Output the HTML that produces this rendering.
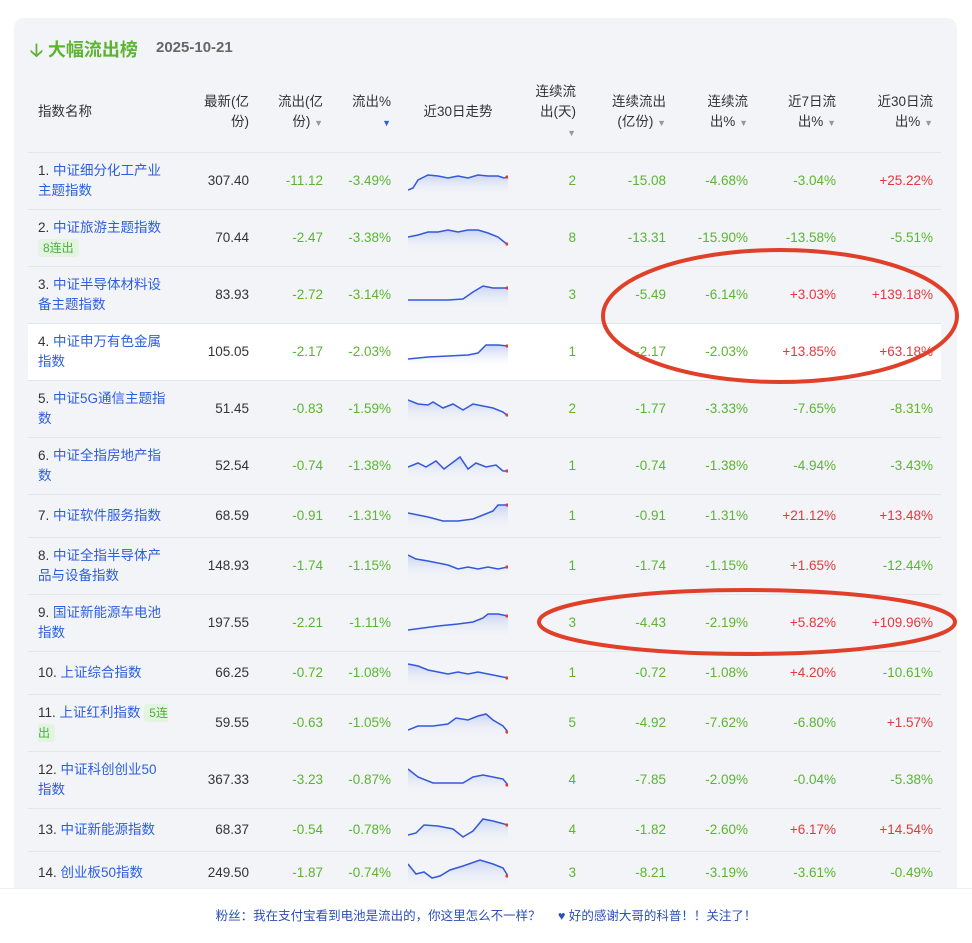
<!DOCTYPE html>
<html><head><meta charset="utf-8"><style>
*{margin:0;padding:0;box-sizing:border-box}
body{width:972px;height:928px;background:#fff;font-family:"Liberation Sans","Noto Sans CJK SC",sans-serif;font-size:13.5px;color:#333;position:relative;overflow:hidden}
.card{position:absolute;left:14px;top:18px;width:943px;height:900px;background:#f2f4f7;border-radius:10px}
.title{position:absolute;left:30px;top:36px;font-size:18px;font-weight:bold;color:#5cb531}
.date{position:absolute;left:156px;top:39px;font-size:15px;font-weight:bold;color:#666}
.hd{position:absolute;top:80px;height:66px;font-size:13.5px;color:#333;line-height:20px}
.r{position:absolute;left:28px;width:913px;border-top:1px solid #e3e6ea}
.r>div{position:absolute;top:0;bottom:0;display:flex;align-items:center;justify-content:flex-end;text-align:right;line-height:20px}
.r .n{left:10px;width:130px;justify-content:flex-start;text-align:left}
.r .a{left:150px;width:71px}
.r .b{left:225px;width:70px;color:#5cb531}
.r .c{left:300px;width:63px;color:#5cb531}
.r .s{left:380px;width:100px;justify-content:center}
.r .d{left:490px;width:58px;color:#5cb531}
.r .e{left:560px;width:78px;color:#5cb531}
.r .f{left:640px;width:80px;color:#5cb531}
.r .g{left:730px;width:78px;color:#5cb531}
.r .h{left:820px;width:85px;color:#5cb531}
.red{color:#e5383b!important}
a{color:#2e5ee0;text-decoration:none}
.tag{background:#e3f5e0;color:#4cae3a;font-size:12px;padding:2px 5px;border-radius:3px}
.t{color:#999;font-size:9px}
.tb{color:#2e5ee0;font-size:9px}
.bar{position:absolute;left:0;top:888px;width:972px;height:40px;background:#fff;border-top:1px solid #eee;text-align:center;font-size:12.5px;color:#2b4fb8;line-height:54px}
</style></head><body>
<div class="card"></div>
<div class="title">🡣 大幅流出榜</div>
<div class="date">2025-10-21</div>

<div class="hd" style="left:38px;top:102px">指数名称</div>
<div class="hd" style="left:190px;width:59px;text-align:right;top:92px">最新(亿<br>份)</div>
<div class="hd" style="left:264px;width:59px;text-align:right;top:92px">流出(亿<br>份) <span class="t">▼</span></div>
<div class="hd" style="left:330px;width:61px;text-align:right;top:92px">流出%<br><span class="tb">▼</span></div>
<div class="hd" style="left:408px;width:100px;text-align:center;top:102px">近30日走势</div>
<div class="hd" style="left:520px;width:56px;text-align:right;top:82px">连续流<br>出(天)<br><span class="t">▼</span></div>
<div class="hd" style="left:590px;width:76px;text-align:right;top:92px">连续流出<br>(亿份) <span class="t">▼</span></div>
<div class="hd" style="left:680px;width:68px;text-align:right;top:92px">连续流<br>出% <span class="t">▼</span></div>
<div class="hd" style="left:760px;width:76px;text-align:right;top:92px">近7日流<br>出% <span class="t">▼</span></div>
<div class="hd" style="left:850px;width:83px;text-align:right;top:92px">近30日流<br>出% <span class="t">▼</span></div>

<svg width="0" height="0" style="position:absolute"><defs><linearGradient id="gf" x1="0" y1="0" x2="0" y2="1"><stop offset="0" stop-color="#c9d4f5"/><stop offset="1" stop-color="#f2f4f7" stop-opacity="0"/></linearGradient></defs></svg>

<div class="r" style="top:152px;height:57px"><div class="n"><span>1. <a>中证细分化工产业主题指数</a></span></div><div class="a">307.40</div><div class="b">-11.12</div><div class="c">-3.49%</div><div class="s"><svg width="100" height="30"><path d="M0,24 L5,22 10,14 20,9 30,10 40,12 50,10 60,12 70,9 80,10 90,10 96,12 100,11 V30 H0Z" fill="url(#gf)"/><polyline points="0,24 5,22 10,14 20,9 30,10 40,12 50,10 60,12 70,9 80,10 90,10 96,12 100,11" fill="none" stroke="#3558d8" stroke-width="1.5"/><circle cx="99" cy="11" r="1.6" fill="#e5383b"/></svg></div><div class="d">2</div><div class="e">-15.08</div><div class="f">-4.68%</div><div class="g">-3.04%</div><div class="h red">+25.22%</div></div>

<div class="r" style="top:209px;height:57px"><div class="n"><span>2. <a>中证旅游主题指数</a><br><span class="tag">8连出</span></span></div><div class="a">70.44</div><div class="b">-2.47</div><div class="c">-3.38%</div><div class="s"><svg width="100" height="30"><path d="M0,14 L10,12 20,9 30,9 40,7 50,9 60,7 70,7 80,10 90,14 100,22 V30 H0Z" fill="url(#gf)"/><polyline points="0,14 10,12 20,9 30,9 40,7 50,9 60,7 70,7 80,10 90,14 100,22" fill="none" stroke="#3558d8" stroke-width="1.5"/><circle cx="99" cy="21" r="1.6" fill="#e5383b"/></svg></div><div class="d">8</div><div class="e">-13.31</div><div class="f">-15.90%</div><div class="g">-13.58%</div><div class="h">-5.51%</div></div>

<div class="r" style="top:266px;height:57px"><div class="n"><span>3. <a>中证半导体材料设备主题指数</a></span></div><div class="a">83.93</div><div class="b">-2.72</div><div class="c">-3.14%</div><div class="s"><svg width="100" height="30"><path d="M0,20 L40,20 55,19 65,12 75,6 85,8 100,8 V30 H0Z" fill="url(#gf)"/><polyline points="0,20 40,20 55,19 65,12 75,6 85,8 100,8" fill="none" stroke="#3558d8" stroke-width="1.5"/><circle cx="99" cy="8" r="1.6" fill="#e5383b"/></svg></div><div class="d">3</div><div class="e">-5.49</div><div class="f">-6.14%</div><div class="g red">+3.03%</div><div class="h red">+139.18%</div></div>

<div class="r" style="top:323px;height:57px;background:#fff"><div class="n"><span>4. <a>中证申万有色金属指数</a></span></div><div class="a">105.05</div><div class="b">-2.17</div><div class="c">-2.03%</div><div class="s"><svg width="100" height="30"><path d="M0,22 L20,20 40,19 60,18 70,16 78,8 90,8 100,9 V30 H0Z" fill="url(#gf)"/><polyline points="0,22 20,20 40,19 60,18 70,16 78,8 90,8 100,9" fill="none" stroke="#3558d8" stroke-width="1.5"/><circle cx="99" cy="9" r="1.6" fill="#e5383b"/></svg></div><div class="d">1</div><div class="e">-2.17</div><div class="f">-2.03%</div><div class="g red">+13.85%</div><div class="h red">+63.18%</div></div>

<div class="r" style="top:380px;height:57px"><div class="n"><span>5. <a>中证5G通信主题指数</a></span></div><div class="a">51.45</div><div class="b">-0.83</div><div class="c">-1.59%</div><div class="s"><svg width="100" height="30"><path d="M0,6 L10,10 20,11 25,8 35,14 45,10 55,16 65,10 75,12 85,14 95,18 100,22 V30 H0Z" fill="url(#gf)"/><polyline points="0,6 10,10 20,11 25,8 35,14 45,10 55,16 65,10 75,12 85,14 95,18 100,22" fill="none" stroke="#3558d8" stroke-width="1.5"/><circle cx="99" cy="21" r="1.6" fill="#e5383b"/></svg></div><div class="d">2</div><div class="e">-1.77</div><div class="f">-3.33%</div><div class="g">-7.65%</div><div class="h">-8.31%</div></div>

<div class="r" style="top:437px;height:57px"><div class="n"><span>6. <a>中证全指房地产指数</a></span></div><div class="a">52.54</div><div class="b">-0.74</div><div class="c">-1.38%</div><div class="s"><svg width="100" height="30"><path d="M0,16 L10,12 18,16 28,10 36,18 44,12 52,6 60,18 68,12 78,16 88,14 95,20 100,20 V30 H0Z" fill="url(#gf)"/><polyline points="0,16 10,12 18,16 28,10 36,18 44,12 52,6 60,18 68,12 78,16 88,14 95,20 100,20" fill="none" stroke="#3558d8" stroke-width="1.5"/><circle cx="99" cy="20" r="1.6" fill="#e5383b"/></svg></div><div class="d">1</div><div class="e">-0.74</div><div class="f">-1.38%</div><div class="g">-4.94%</div><div class="h">-3.43%</div></div>

<div class="r" style="top:494px;height:43px"><div class="n"><span>7. <a>中证软件服务指数</a></span></div><div class="a">68.59</div><div class="b">-0.91</div><div class="c">-1.31%</div><div class="s"><svg width="100" height="30"><path d="M0,12 L20,16 35,20 50,20 65,18 75,14 85,10 90,4 100,4 V30 H0Z" fill="url(#gf)"/><polyline points="0,12 20,16 35,20 50,20 65,18 75,14 85,10 90,4 100,4" fill="none" stroke="#3558d8" stroke-width="1.5"/><circle cx="99" cy="4" r="1.6" fill="#e5383b"/></svg></div><div class="d">1</div><div class="e">-0.91</div><div class="f">-1.31%</div><div class="g red">+21.12%</div><div class="h red">+13.48%</div></div>

<div class="r" style="top:537px;height:57px"><div class="n"><span>8. <a>中证全指半导体产品与设备指数</a></span></div><div class="a">148.93</div><div class="b">-1.74</div><div class="c">-1.15%</div><div class="s"><svg width="100" height="30"><path d="M0,4 L8,8 20,10 30,12 40,14 50,18 60,16 70,18 80,16 90,18 100,16 V30 H0Z" fill="url(#gf)"/><polyline points="0,4 8,8 20,10 30,12 40,14 50,18 60,16 70,18 80,16 90,18 100,16" fill="none" stroke="#3558d8" stroke-width="1.5"/><circle cx="99" cy="16" r="1.6" fill="#e5383b"/></svg></div><div class="d">1</div><div class="e">-1.74</div><div class="f">-1.15%</div><div class="g red">+1.65%</div><div class="h">-12.44%</div></div>

<div class="r" style="top:594px;height:57px"><div class="n"><span>9. <a>国证新能源车电池指数</a></span></div><div class="a">197.55</div><div class="b">-2.21</div><div class="c">-1.11%</div><div class="s"><svg width="100" height="30"><path d="M0,22 L15,20 30,18 50,16 65,14 75,10 80,6 90,6 100,8 V30 H0Z" fill="url(#gf)"/><polyline points="0,22 15,20 30,18 50,16 65,14 75,10 80,6 90,6 100,8" fill="none" stroke="#3558d8" stroke-width="1.5"/><circle cx="99" cy="8" r="1.6" fill="#e5383b"/></svg></div><div class="d">3</div><div class="e">-4.43</div><div class="f">-2.19%</div><div class="g red">+5.82%</div><div class="h red">+109.96%</div></div>

<div class="r" style="top:651px;height:43px"><div class="n"><span>10. <a>上证综合指数</a></span></div><div class="a">66.25</div><div class="b">-0.72</div><div class="c">-1.08%</div><div class="s"><svg width="100" height="30"><path d="M0,6 L10,8 20,12 30,14 40,16 50,14 60,16 70,14 80,16 90,18 100,20 V30 H0Z" fill="url(#gf)"/><polyline points="0,6 10,8 20,12 30,14 40,16 50,14 60,16 70,14 80,16 90,18 100,20" fill="none" stroke="#3558d8" stroke-width="1.5"/><circle cx="99" cy="20" r="1.6" fill="#e5383b"/></svg></div><div class="d">1</div><div class="e">-0.72</div><div class="f">-1.08%</div><div class="g red">+4.20%</div><div class="h">-10.61%</div></div>

<div class="r" style="top:694px;height:57px"><div class="n"><span>11. <a>上证红利指数</a> <span class="tag">5连出</span></span></div><div class="a">59.55</div><div class="b">-0.63</div><div class="c">-1.05%</div><div class="s"><svg width="100" height="30"><path d="M0,22 L10,18 25,18 40,16 48,10 60,12 70,8 78,6 85,12 95,18 100,24 V30 H0Z" fill="url(#gf)"/><polyline points="0,22 10,18 25,18 40,16 48,10 60,12 70,8 78,6 85,12 95,18 100,24" fill="none" stroke="#3558d8" stroke-width="1.5"/><circle cx="99" cy="24" r="1.6" fill="#e5383b"/></svg></div><div class="d">5</div><div class="e">-4.92</div><div class="f">-7.62%</div><div class="g">-6.80%</div><div class="h red">+1.57%</div></div>

<div class="r" style="top:751px;height:57px"><div class="n"><span>12. <a>中证科创创业50指数</a></span></div><div class="a">367.33</div><div class="b">-3.23</div><div class="c">-0.87%</div><div class="s"><svg width="100" height="30"><path d="M0,4 L10,12 25,18 40,18 55,18 65,12 75,10 85,12 95,14 100,20 V30 H0Z" fill="url(#gf)"/><polyline points="0,4 10,12 25,18 40,18 55,18 65,12 75,10 85,12 95,14 100,20" fill="none" stroke="#3558d8" stroke-width="1.5"/><circle cx="99" cy="20" r="1.6" fill="#e5383b"/></svg></div><div class="d">4</div><div class="e">-7.85</div><div class="f">-2.09%</div><div class="g">-0.04%</div><div class="h">-5.38%</div></div>

<div class="r" style="top:808px;height:43px"><div class="n"><span>13. <a>中证新能源指数</a></span></div><div class="a">68.37</div><div class="b">-0.54</div><div class="c">-0.78%</div><div class="s"><svg width="100" height="30"><path d="M0,20 L8,18 16,10 30,11 45,14 55,22 65,16 75,4 85,6 100,10 V30 H0Z" fill="url(#gf)"/><polyline points="0,20 8,18 16,10 30,11 45,14 55,22 65,16 75,4 85,6 100,10" fill="none" stroke="#3558d8" stroke-width="1.5"/><circle cx="99" cy="10" r="1.6" fill="#e5383b"/></svg></div><div class="d">4</div><div class="e">-1.82</div><div class="f">-2.60%</div><div class="g red">+6.17%</div><div class="h red">+14.54%</div></div>

<div class="r" style="top:851px;height:43px"><div class="n"><span>14. <a>创业板50指数</a></span></div><div class="a">249.50</div><div class="b">-1.87</div><div class="c">-0.74%</div><div class="s"><svg width="100" height="30"><path d="M0,6 L8,16 16,14 24,20 32,18 42,12 55,8 72,2 85,6 95,10 100,18 V30 H0Z" fill="url(#gf)"/><polyline points="0,6 8,16 16,14 24,20 32,18 42,12 55,8 72,2 85,6 95,10 100,18" fill="none" stroke="#3558d8" stroke-width="1.5"/><circle cx="99" cy="18" r="1.6" fill="#e5383b"/></svg></div><div class="d">3</div><div class="e">-8.21</div><div class="f">-3.19%</div><div class="g">-3.61%</div><div class="h">-0.49%</div></div>

<svg style="position:absolute;left:0;top:0" width="972" height="928"><ellipse cx="780" cy="316" rx="177" ry="66" fill="none" stroke="#e0402a" stroke-width="4"/><ellipse cx="747" cy="622" rx="208" ry="32" fill="none" stroke="#e0402a" stroke-width="4"/></svg>

<div class="bar">粉丝：我在支付宝看到电池是流出的，你这里怎么不一样？&nbsp;&nbsp;&nbsp;&nbsp;&nbsp;♥ 好的感谢大哥的科普！！关注了！</div>
</body></html>
